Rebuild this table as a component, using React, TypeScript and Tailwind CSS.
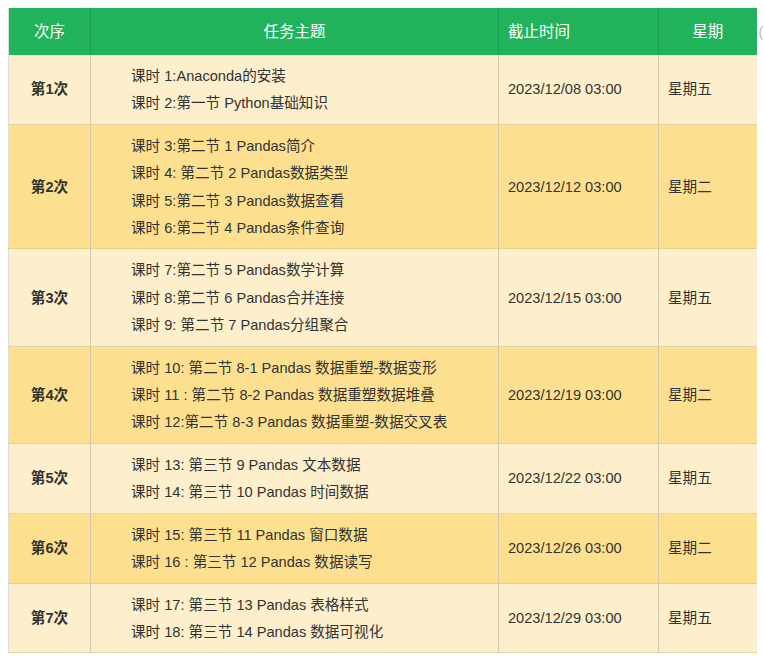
import React from "react";

type Row = {
  no: string;
  lessons: string[];
  deadline: string;
  weekday: string;
};

const rows: Row[] = [
  {
    no: "第1次",
    lessons: ["课时 1:Anaconda的安装", "课时 2:第一节 Python基础知识"],
    deadline: "2023/12/08 03:00",
    weekday: "星期五",
  },
  {
    no: "第2次",
    lessons: [
      "课时 3:第二节 1 Pandas简介",
      "课时 4: 第二节 2 Pandas数据类型",
      "课时 5:第二节 3 Pandas数据查看",
      "课时 6:第二节 4 Pandas条件查询",
    ],
    deadline: "2023/12/12 03:00",
    weekday: "星期二",
  },
  {
    no: "第3次",
    lessons: [
      "课时 7:第二节 5 Pandas数学计算",
      "课时 8:第二节 6 Pandas合并连接",
      "课时 9: 第二节 7 Pandas分组聚合",
    ],
    deadline: "2023/12/15 03:00",
    weekday: "星期五",
  },
  {
    no: "第4次",
    lessons: [
      "课时 10: 第二节 8-1 Pandas 数据重塑-数据变形",
      "课时 11 : 第二节 8-2 Pandas 数据重塑数据堆叠",
      "课时 12:第二节 8-3 Pandas 数据重塑-数据交叉表",
    ],
    deadline: "2023/12/19 03:00",
    weekday: "星期二",
  },
  {
    no: "第5次",
    lessons: ["课时 13: 第三节 9 Pandas 文本数据", "课时 14: 第三节 10 Pandas 时间数据"],
    deadline: "2023/12/22 03:00",
    weekday: "星期五",
  },
  {
    no: "第6次",
    lessons: ["课时 15: 第三节 11 Pandas 窗口数据", "课时 16 : 第三节 12 Pandas 数据读写"],
    deadline: "2023/12/26 03:00",
    weekday: "星期二",
  },
  {
    no: "第7次",
    lessons: ["课时 17: 第三节 13 Pandas 表格样式", "课时 18: 第三节 14 Pandas 数据可视化"],
    deadline: "2023/12/29 03:00",
    weekday: "星期五",
  },
];

const App = () => {
  return (
    <div
      className="flex bg-white pt-2 pl-2 text-[14.6px] text-[#333]"
      style={{ fontFamily: '"Liberation Sans", "Noto Sans CJK SC", sans-serif' }}
    >
      <table className="w-[748px] table-fixed border-collapse border-l border-[#dcdcdc]">
        <colgroup>
          <col className="w-[82px]" />
          <col className="w-[408px]" />
          <col className="w-[160px]" />
          <col className="w-[98px]" />
        </colgroup>
        {/* HEADER */}
        <thead>
          <tr className="h-[47px] bg-[#21b35b] text-[15.5px] text-white">
            <th className="border-r border-[#1c9e4f] text-center font-normal">次序</th>
            <th className="border-r border-[#1c9e4f] text-center font-normal">任务主题</th>
            <th className="border-r border-[#1c9e4f] pl-[9px] text-left font-normal">截止时间</th>
            <th className="text-center font-normal">星期</th>
          </tr>
        </thead>
        {/* BODY */}
        <tbody>
          {rows.map((row, i) => (
            <tr
              key={row.no}
              className={
                i % 2 === 0
                  ? "border-b border-[#e2d3a8] bg-[#fdefcb]"
                  : "border-b border-[#e6cf8a] bg-[#fde08f]"
              }
            >
              <td className="border-r border-[#d4c9ad] pt-[2px] text-center font-semibold">{row.no}</td>
              <td className="border-r border-[#d4c9ad] pt-[8px] pb-[6px] pl-[40px]">
                {row.lessons.map((l) => (
                  <div key={l} className="leading-[27.4px] whitespace-nowrap">
                    {l}
                  </div>
                ))}
              </td>
              <td className="border-r border-[#d4c9ad] pt-[2px] pl-[9px]">{row.deadline}</td>
              <td className="pt-[2px] pl-[9px]">{row.weekday}</td>
            </tr>
          ))}
        </tbody>
      </table>
      <div className="mt-[14px] ml-[2px] h-[22px] w-[8px] overflow-hidden text-[14px] text-[#bbb]">(</div>
    </div>
  );
};

export default App;
